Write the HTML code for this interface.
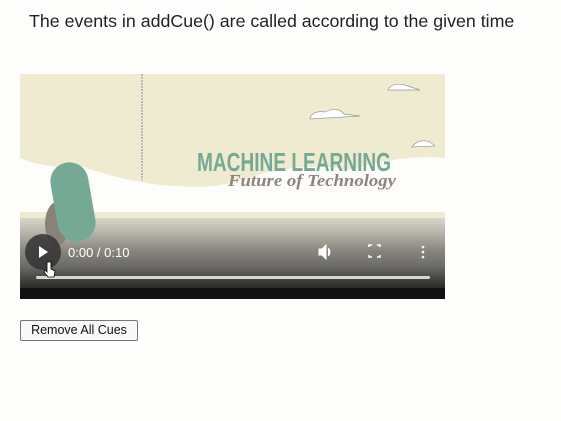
<!DOCTYPE html>
<html><head><style>
body{margin:0;width:561px;height:421px;background:#fefefd;font-family:"Liberation Sans",sans-serif;position:relative;overflow:hidden}
h1{position:absolute;left:29px;top:11px;margin:0;font-size:17.8px;font-weight:normal;color:#222}
.v{position:absolute;left:20px;top:74px;width:425px;height:225px;background:#efebd0;overflow:hidden}
.btn{position:absolute;left:20px;top:320px;width:116px;height:19px;border:1px solid #767676;border-radius:2px;background:#f8f8f6;font-size:12.5px;text-align:center;line-height:19px;color:#111}
</style></head><body>
<h1>The events in addCue() are called according to the given time</h1>
<div class="v">
<svg width="425" height="225" style="position:absolute;left:0;top:0">
<defs><linearGradient id="g" x1="0" y1="0" x2="0" y2="1">
<stop offset="0" stop-color="#d8d6c8"/><stop offset="0.2" stop-color="#b8b6ac"/><stop offset="0.45" stop-color="#8a8880"/><stop offset="0.7" stop-color="#6a6964"/><stop offset="0.85" stop-color="#4a4946"/><stop offset="1" stop-color="#2a2a28"/></linearGradient></defs>
<line x1="122" y1="0" x2="122" y2="106" stroke="#bbb" stroke-width="2" stroke-dasharray="2 1"/>
<path d="M0 84 Q30 96 60 92 Q120 112 160 112 Q200 116 240 100 Q290 88 330 96 Q380 80 425 84 L425 140 L0 140Z" fill="#fdfdfb"/>
<rect x="0" y="138" width="425" height="6" fill="#efebd0"/>
<rect x="0" y="144" width="425" height="70" fill="url(#g)"/>
<rect x="0" y="214" width="425" height="11" fill="#111"/>
<path d="M290 45 Q292 36 305 38 Q318 32 324 40 L340 42 Z" fill="#fff" stroke="#999" stroke-width=".7"/>
<path d="M368 16 Q372 8 385 11 L400 16Z" fill="#fff" stroke="#999" stroke-width=".7"/>
<path d="M392 73 Q398 64 410 68 L415 72Z" fill="#fff" stroke="#999" stroke-width=".7"/>
<ellipse cx="37" cy="150" rx="12" ry="22" fill="#8a8278"/>
<rect x="34" y="88" width="38" height="80" rx="19" transform="rotate(-10 53 128)" fill="#76a896"/>
<text x="177" y="97" font-family="Liberation Sans Narrow,Liberation Sans" font-weight="bold" font-size="26" fill="#76a896" textLength="194" lengthAdjust="spacingAndGlyphs">MACHINE LEARNING</text>
<text x="208" y="112" font-family="Liberation Serif" font-style="italic" font-weight="bold" font-size="17" fill="#8f857c" textLength="168" lengthAdjust="spacingAndGlyphs">Future of Technology</text>
<circle cx="23" cy="178" r="18" fill="#333" opacity=".85"/>
<path d="M19 172 L28 178 L19 184Z" fill="#fff"/>
<text x="48" y="183" font-size="13" fill="#fff">0:00 / 0:10</text>
<path d="M299 175 h3 l4 -4 v14 l-4 -4 h-3Z M308 174 a5 5 0 0 1 0 8" fill="#fff" stroke="#fff" stroke-width="1"/>
<path d="M349 173 v-2 h3 M357 171 h3 v2 M360 181 v2 h-3 M352 183 h-3 v-2" stroke="#fff" stroke-width="1.5" fill="none"/>
<circle cx="403" cy="173" r="1.3" fill="#fff"/><circle cx="403" cy="178" r="1.3" fill="#fff"/><circle cx="403" cy="183" r="1.3" fill="#fff"/>
<rect x="16" y="202" width="394" height="3" rx="1.5" fill="#d8d8d0"/>
<path d="M27 188 v10 l-2 -2 l-1 2 l4 5 h6 l1 -6 l-4 -2 v-7Z" fill="#fff" stroke="#000" stroke-width=".8"/>
</svg>
</div>
<div class="btn">Remove All Cues</div>
</body></html>
